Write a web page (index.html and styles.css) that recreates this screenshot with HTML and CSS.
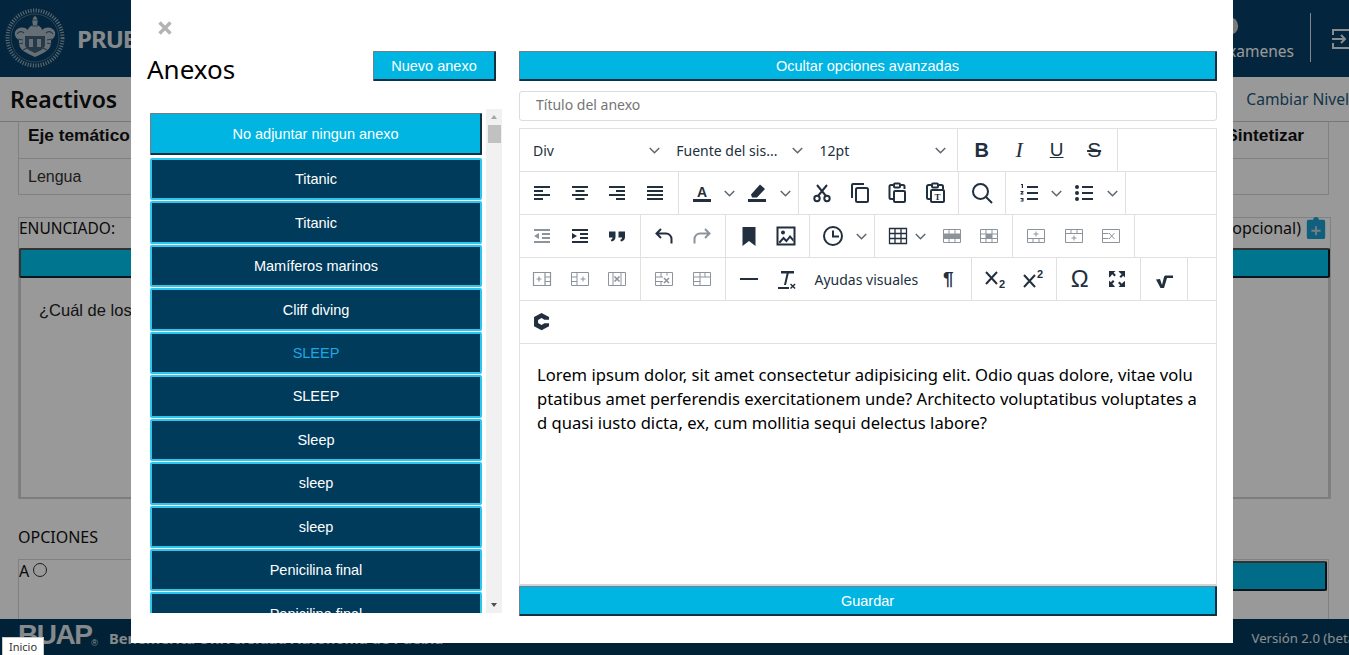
FILE: index.html
```html
<!DOCTYPE html>
<html lang="es">
<head>
<meta charset="utf-8">
<title>Anexos</title>
<link rel="stylesheet" href="styles.css">
</head>
<body>
<svg class="defs" aria-hidden="true">
  <symbol id="chev" viewBox="0 0 10 6"><path d="M.7.7 5 5 9.3.7" fill="none" stroke="currentColor" stroke-width="1.4"/></symbol>
  <symbol id="left" viewBox="0 0 24 24"><path d="M4 5h16v2H4zM4 9h9v2H4zM4 13h16v2H4zM4 17h9v2H4z"/></symbol>
  <symbol id="center" viewBox="0 0 24 24"><path d="M4 5h16v2H4zM7.500 9h9v2h-9zM4 13h16v2H4zM7.500 17h9v2h-9z"/></symbol>
  <symbol id="right" viewBox="0 0 24 24"><path d="M4 5h16v2H4zM11 9h9v2h-9zM4 13h16v2H4zM11 17h9v2h-9z"/></symbol>
  <symbol id="just" viewBox="0 0 24 24"><path d="M4 5h16v2H4zM4 9h16v2H4zM4 13h16v2H4zM4 17h16v2H4z"/></symbol>
  <symbol id="pen" viewBox="0 0 24 24"><path d="M3 18h18v3H3zM15 3.500l5 4.500-8 8.500H7l-1-3z"/></symbol>
  <symbol id="cut" viewBox="0 0 24 24"><g fill="none" stroke="currentColor" stroke-width="2"><circle cx="7" cy="17.500" r="2.700"/><circle cx="17" cy="17.500" r="2.700"/><path d="M16 15 7 4M8 15l9-11"/></g></symbol>
  <symbol id="copy" viewBox="0 0 24 24"><g fill="none" stroke="currentColor" stroke-width="2"><path d="M4 17V4a1 1 0 0 1 1-1h11"/><rect x="8" y="7" width="12" height="14" rx="1.500"/></g></symbol>
  <symbol id="paste" viewBox="0 0 24 24"><g fill="none" stroke="currentColor" stroke-width="2"><path d="M8 18H6a1.500 1.500 0 0 1-1.500-1.500v-11A1.500 1.500 0 0 1 6 4h2M16 4h2a1.500 1.500 0 0 1 1.500 1.500V8"/><rect x="9" y="2.500" width="6" height="4" rx="1"/><rect x="9" y="10" width="11" height="11" rx="1"/></g></symbol>
  <symbol id="search" viewBox="0 0 24 24"><g fill="none" stroke="currentColor" stroke-width="2"><circle cx="10.500" cy="10.500" r="7.500"/><path d="m16 16 6 6"/></g></symbol>
  <symbol id="num" viewBox="0 0 24 24"><path d="M10 5h11v2H10zM10 11h11v2H10zM10 17h11v2H10z"/><path d="M4 3h2v4H4.800V4H4zM3.500 10h3v1L5 12.500h1.500v1h-3v-1L5 11H3.500zM3.500 17h3v3.500h-3v-.8h1.900v-.5H4.300v-.7h1.100v-.5H3.500z"/></symbol>
  <symbol id="bul" viewBox="0 0 24 24"><path d="M10 5h11v2H10zM10 11h11v2H10zM10 17h11v2H10z"/><circle cx="5" cy="6" r="2"/><circle cx="5" cy="12" r="2"/><circle cx="5" cy="18" r="2"/></symbol>
  <symbol id="outd" viewBox="0 0 24 24"><path d="M4 5h16v2H4zM12 9h8v2h-8zM12 13h8v2h-8zM4 17h16v2H4zM9 9v6l-5-3z"/></symbol>
  <symbol id="ind" viewBox="0 0 24 24"><path d="M4 5h16v2H4zM12 9h8v2h-8zM12 13h8v2h-8zM4 17h16v2H4zM4 9v6l5-3z"/></symbol>
  <symbol id="quote" viewBox="0 0 24 24"><path d="M4 7.500h6.500v5.500c0 2.500-1.500 4-4 4.500l-.8-1.700c1.200-.4 1.800-1 1.900-2.300H4zM13.500 7.500H20v5.500c0 2.500-1.500 4-4 4.500l-.8-1.700c1.200-.4 1.800-1 1.900-2.300h-3.600z"/></symbol>
  <symbol id="undo" viewBox="0 0 24 24"><path d="M9 5 4.500 9.500 9 14M5 9.500h9a5.500 5.500 0 0 1 5.500 5.500v4.500" fill="none" stroke="currentColor" stroke-width="2"/></symbol>
  <symbol id="redo" viewBox="0 0 24 24"><path d="M15 5l4.500 4.500L15 14M19 9.500h-9A5.500 5.500 0 0 0 4.500 15v4.500" fill="none" stroke="currentColor" stroke-width="2"/></symbol>
  <symbol id="mark" viewBox="0 0 24 24"><path d="M5.500 3h13v19L12 17l-6.500 5z"/></symbol>
  <symbol id="image" viewBox="0 0 24 24"><path d="M2.500 2.500h19v19h-19zm2 2v15h15v-15z" fill-rule="evenodd"/><circle cx="9" cy="8.500" r="2"/><path d="m4.500 18 5-5.500 3 3 3.500-4.500 3.500 4v3l-3.500-4-3.500 4.500-3-3-3.500 4z"/></symbol>
  <symbol id="clock" viewBox="0 0 24 24"><g fill="none" stroke="currentColor" stroke-width="2"><circle cx="12" cy="12" r="9"/><path d="M12 6.500V12.500H18"/></g></symbol>
  <symbol id="grid" viewBox="0 0 24 24"><path d="M3.500 4.500h17v15h-17zM3.500 9.500h17M3.500 14.500h17M9 4.500v15M15 4.500v15" fill="none" stroke="currentColor" stroke-width="1.300"/></symbol>
  <symbol id="rowp" viewBox="0 0 24 24"><path d="M3.500 5.500h17v13h-17zM3.500 10h17M3.500 14.500h17M9 5.500v13M15 5.500v13" fill="none" stroke="currentColor"/><path d="M3.500 10h17v4.500h-17z"/></symbol>
  <symbol id="cellp" viewBox="0 0 24 24"><path d="M3.500 5.500h17v13h-17zM3.500 10h17M3.500 14.500h17M9 5.500v13M15 5.500v13" fill="none" stroke="currentColor"/><path d="M9 10h6v4.500H9z"/></symbol>
  <symbol id="rowb" viewBox="0 0 24 24"><path d="M3.500 5.500h17v13h-17zM3.500 14.500h17M9 14.500v4M15 14.500v4M12 7.500v5M9.500 10h5" fill="none" stroke="currentColor"/></symbol>
  <symbol id="rowa" viewBox="0 0 24 24"><path d="M3.500 5.500h17v13h-17zM3.500 9.500h17M9 5.500v4M15 5.500v4M12 11.500v5M9.500 14h5" fill="none" stroke="currentColor"/></symbol>
  <symbol id="rowx" viewBox="0 0 24 24"><path d="M3.500 5.500h17v13h-17zM3.500 9.500h6M3.500 14.500h6M10 9l5.500 6M15.500 9 10 15" fill="none" stroke="currentColor"/></symbol>
  <symbol id="colb" viewBox="0 0 24 24"><path d="M3.500 5.500h17v13h-17zM15 5.500v13M15 10h5.500M15 14.500h5.500M9 9.500v5M6.500 12h5" fill="none" stroke="currentColor" stroke-width="1.200"/></symbol>
  <symbol id="cola" viewBox="0 0 24 24"><path d="M3.500 5.500h17v13h-17zM9 5.500v13M3.500 10H9M3.500 14.500H9M15 9.500v5M12.500 12h5" fill="none" stroke="currentColor" stroke-width="1"/></symbol>
  <symbol id="colx" viewBox="0 0 24 24"><path d="M3.500 5.500h17v13h-17zM8 5.500v13M16 5.500v13" fill="none" stroke="currentColor"/><path d="m9.500 9.500 5 5M14.500 9.500l-5 5" fill="none" stroke="currentColor" stroke-width="1.600"/></symbol>
  <symbol id="cellx" viewBox="0 0 24 24"><path d="M3.500 5.500h17v13h-17zM3.500 10H11M3.500 14.500H11M9 5.500v4.500M15 5.500v3M9 14.500v4" fill="none" stroke="currentColor"/><path d="m12 11 5 5M17 11l-5 5" fill="none" stroke="currentColor" stroke-width="1.600"/></symbol>
  <symbol id="props" viewBox="0 0 24 24"><path d="M3.500 5.500h17v13h-17zM3.500 10h17M3.500 14.500h7M10 5.500v13M15 5.500v4.500" fill="none" stroke="currentColor"/></symbol>
  <symbol id="hr" viewBox="0 0 24 24"><path d="M3 11h18v2H3z"/></symbol>
  <symbol id="clear" viewBox="0 0 24 24"><path d="M7 4h13v2.500h-5.300L12 18h-2l2.600-11.500H7zM4 20h11v2H4zM17 16.500l1.800 1.800 1.800-1.800 1 1-1.800 1.800 1.800 1.800-1 1-1.800-1.800-1.800 1.800-1-1 1.800-1.800-1.800-1.800z"/></symbol>
  <symbol id="full" viewBox="0 0 24 24"><path d="M4 4h6.500L8.700 5.800l2.200 2.200-1.500 1.500-2.200-2.200L5.500 9.500 4 10.500zM20 4v6.500l-1.800-1.800-2.200 2.200-1.500-1.500 2.200-2.200L14.500 5.500 13.500 4zM4 20v-6.500l1.800 1.800 2.200-2.200 1.500 1.500-2.200 2.200 1.700 1.700 1 1.500zM20 20h-6.500l1.800-1.800-2.200-2.200 1.500-1.500 2.200 2.200 1.700-1.700 1.500-1z"/></symbol>
  <symbol id="check" viewBox="0 0 24 24"><path d="M4 12.500l4-.5 2 6 2-8c.3-1 1-1.500 2-1.500h7v2.500h-6l-3 10H8.500z"/></symbol>
  <symbol id="cfont" viewBox="2 2 20.800 20.800"><path d="M12 4.500 18.500 8v2.500h-4L12 9l-3 1.700v2.600L12 15l2.500-1.500h4V16L12 19.500 5.500 16V8z"/></symbol>
</svg>

<div class="page">
  <header class="top">
    <div class="brand">
      <svg class="seal" viewBox="0 0 60 60">
        <circle cx="30" cy="30" r="27.500" fill="none" stroke="#93a9b7" stroke-width="4" stroke-dasharray="1.200 1.400"/>
        <circle cx="30" cy="30" r="24" fill="none" stroke="#7f98a8" stroke-width=".6"/>
        <path d="M30 8c3 2 3 6 2 9 3 1 5 3 5 5 4-4 11-3 13 2 1 4-2 7-4 8 1 5-2 10-6 12-3 2-6 3-10 5-4-2-7-3-10-5-4-2-7-7-6-12-2-1-5-4-4-8 2-5 9-6 13-2 0-2 2-4 5-5-1-3-1-7 2-9z" fill="#a9b9c4"/>
        <path d="M20 28h20v9c0 3-5 6-10 8-5-2-10-5-10-8z" fill="#3f6078"/>
        <path d="M24 31h4v8h-4zM32 31h4v8h-4z" fill="#a9b9c4"/>
        <path d="M12 26c2-3 5-3 7-1M41 25c2-2 5-2 7 1M13 31l5 1M42 32l5-1M14 36l4-1M42 35l4 1M27 12h6M27 18h6M18 42l4-2M42 42l-4-2" fill="none" stroke="#3f6078" stroke-width="1.200"/>
      </svg>
      <span class="brand-name">PRUEBAS</span>
    </div>
    <nav class="top-nav">
      <a class="nav-item">
        <svg class="nav-ic" viewBox="0 0 24 24"><circle cx="12" cy="12" r="10"/></svg>
        <span class="nav-label">Examenes</span>
      </a>
      <span class="nav-sep"></span>
      <svg class="logout" viewBox="0 0 24 24"><path d="M2 8V3H22V21H2V16M1 12h13M10 8l4 4-4 4" fill="none" stroke="currentColor" stroke-width="2"/></svg>
    </nav>
  </header>
  <div class="subbar">
    <h1 class="subbar-title">Reactivos</h1>
    <span class="subbar-link">Cambiar Nivel</span>
  </div>
  <main class="content">
    <div class="meta">
      <div class="meta-cell head">Eje temático</div>
      <div class="meta-cell head end">Sintetizar</div>
      <div class="meta-cell">Lengua</div>
      <div class="meta-cell"></div>
    </div>
    <section class="stmt">
      <div class="stmt-head">
        <span>ENUNCIADO:</span>
        <span class="stmt-opt">Imagen (opcional)
          <svg class="clip" viewBox="0 0 20 24"><path d="M2 3h5a3 3 0 0 1 6 0h5a2 2 0 0 1 2 2v17a2 2 0 0 1-2 2H2a2 2 0 0 1-2-2V5a2 2 0 0 1 2-2z"/><path d="M9 10h2v4h4v2h-4v4H9v-4H5v-2h4z" fill="#c8d4da"/></svg>
        </span>
      </div>
      <div class="teal-bar top-bar"></div>
      <div class="stmt-body">¿Cuál de los siguientes enunciados es correcto?</div>
    </section>
    <h2 class="opts-title">OPCIONES</h2>
    <div class="opts">
      <div class="opt"><span class="opt-label">A</span><span class="radio"></span></div>
      <div class="opt"><div class="teal-bar"></div></div>
    </div>
  </main>
  <footer class="foot">
    <span class="foot-logo">BUAP<sup>®</sup></span>
    <span class="foot-name">Benemérita Universidad Autónoma de Puebla</span>
    <span class="foot-ver">Versión 2.0 (beta)</span>
  </footer>
</div>

<div class="overlay"></div>

<div class="modal">
  <div class="modal-close"><svg class="x" viewBox="0 0 14 14"><path d="M1.500 1.500l11 11M12.500 1.500l-11 11" stroke="currentColor" stroke-width="3.400" fill="none"/></svg></div>
  <div class="modal-cols">
    <div class="col-left">
      <div class="left-head">
        <h2 class="left-title">Anexos</h2>
        <button class="btn btn-new">Nuevo anexo</button>
      </div>
      <div class="list-wrap">
        <div class="list">
          <button class="btn btn-none">No adjuntar ningun anexo</button>
          <button class="item">Titanic</button>
          <button class="item">Titanic</button>
          <button class="item">Mamíferos marinos</button>
          <button class="item">Cliff diving</button>
          <button class="item active">SLEEP</button>
          <button class="item">SLEEP</button>
          <button class="item">Sleep</button>
          <button class="item">sleep</button>
          <button class="item">sleep</button>
          <button class="item">Penicilina final</button>
          <button class="item">Penicilina final</button>
        </div>
        <div class="sbar">
          <span class="sbar-up"></span>
          <span class="sbar-thumb"></span>
          <span class="sbar-down"></span>
        </div>
      </div>
    </div>
    <div class="col-right">
      <button class="btn btn-wide">Ocultar opciones avanzadas</button>
      <input class="title-input" type="text" placeholder="Título del anexo">
      <div class="editor">
        <div class="tb-row">
          <div class="grp">
            <div class="sel"><span>Div</span><svg class="chev"><use href="#chev"/></svg></div>
            <div class="sel"><span>Fuente del sis...</span><svg class="chev"><use href="#chev"/></svg></div>
            <div class="sel"><span>12pt</span><svg class="chev"><use href="#chev"/></svg></div>
          </div>
          <div class="grp">
            <span class="tb tb-txt b">B</span>
            <span class="tb tb-txt i">I</span>
            <span class="tb tb-txt u">U</span>
            <span class="tb tb-txt s">S</span>
          </div>
        </div>
        <div class="tb-row">
          <div class="grp">
            <span class="tb"><svg class="ic"><use href="#left"/></svg></span>
            <span class="tb"><svg class="ic"><use href="#center"/></svg></span>
            <span class="tb"><svg class="ic"><use href="#right"/></svg></span>
            <span class="tb"><svg class="ic"><use href="#just"/></svg></span>
          </div>
          <div class="grp">
            <span class="tb"><svg class="ic" viewBox="0 0 24 24"><path d="M3 18h18v3H3z"/><text x="12" y="15.500" text-anchor="middle" font-family="Liberation Sans" font-weight="700" font-size="14">A</text></svg></span><span class="tb-ch"><svg class="chev"><use href="#chev"/></svg></span>
            <span class="tb"><svg class="ic"><use href="#pen"/></svg></span><span class="tb-ch"><svg class="chev"><use href="#chev"/></svg></span>
          </div>
          <div class="grp">
            <span class="tb"><svg class="ic"><use href="#cut"/></svg></span>
            <span class="tb"><svg class="ic"><use href="#copy"/></svg></span>
            <span class="tb"><svg class="ic"><use href="#paste"/></svg></span>
            <span class="tb"><svg class="ic" viewBox="0 0 24 24"><g fill="none" stroke="currentColor" stroke-width="2"><path d="M7 18H5.500A1.500 1.500 0 0 1 4 16.500v-11A1.500 1.500 0 0 1 5.500 4H8M16 4h2.500A1.500 1.500 0 0 1 20 5.500V8"/><rect x="9" y="2.500" width="6" height="4" rx="1"/><rect x="8" y="9" width="13" height="12" rx="1"/></g><text x="14.500" y="18.500" text-anchor="middle" font-family="Liberation Serif" font-weight="700" font-size="9">T</text></svg></span>
          </div>
          <div class="grp">
            <span class="tb"><svg class="ic"><use href="#search"/></svg></span>
          </div>
          <div class="grp">
            <span class="tb"><svg class="ic"><use href="#num"/></svg></span><span class="tb-ch"><svg class="chev"><use href="#chev"/></svg></span>
            <span class="tb"><svg class="ic"><use href="#bul"/></svg></span><span class="tb-ch"><svg class="chev"><use href="#chev"/></svg></span>
          </div>
        </div>
        <div class="tb-row">
          <div class="grp">
            <span class="tb off"><svg class="ic"><use href="#outd"/></svg></span>
            <span class="tb"><svg class="ic"><use href="#ind"/></svg></span>
            <span class="tb"><svg class="ic"><use href="#quote"/></svg></span>
          </div>
          <div class="grp">
            <span class="tb"><svg class="ic"><use href="#undo"/></svg></span>
            <span class="tb off"><svg class="ic"><use href="#redo"/></svg></span>
          </div>
          <div class="grp">
            <span class="tb"><svg class="ic"><use href="#mark"/></svg></span>
            <span class="tb"><svg class="ic"><use href="#image"/></svg></span>
          </div>
          <div class="grp">
            <span class="tb"><svg class="ic"><use href="#clock"/></svg></span><span class="tb-ch"><svg class="chev"><use href="#chev"/></svg></span>
          </div>
          <div class="grp">
            <span class="tb"><svg class="ic"><use href="#grid"/></svg></span><span class="tb-ch tb-ch-tight"><svg class="chev"><use href="#chev"/></svg></span>
            <span class="tb off tb-after-tight"><svg class="ic"><use href="#rowp"/></svg></span>
            <span class="tb off"><svg class="ic"><use href="#cellp"/></svg></span>
          </div>
          <div class="grp">
            <span class="tb off"><svg class="ic"><use href="#rowb"/></svg></span>
            <span class="tb off"><svg class="ic"><use href="#rowa"/></svg></span>
            <span class="tb off"><svg class="ic"><use href="#rowx"/></svg></span>
          </div>
        </div>
        <div class="tb-row">
          <div class="grp">
            <span class="tb off"><svg class="ic"><use href="#colb"/></svg></span>
            <span class="tb off"><svg class="ic"><use href="#cola"/></svg></span>
            <span class="tb off"><svg class="ic"><use href="#colx"/></svg></span>
          </div>
          <div class="grp">
            <span class="tb off"><svg class="ic"><use href="#cellx"/></svg></span>
            <span class="tb off"><svg class="ic"><use href="#props"/></svg></span>
          </div>
          <div class="grp">
            <span class="tb"><svg class="ic"><use href="#hr"/></svg></span>
            <span class="tb"><svg class="ic"><use href="#clear"/></svg></span>
            <span class="tb-word">Ayudas visuales</span>
            <span class="tb tb-txt para">¶</span>
          </div>
          <div class="grp">
            <span class="tb"><svg class="ic" viewBox="0 0 24 24"><path d="m3 5 11 12M14 5 3 17" fill="none" stroke="currentColor" stroke-width="2"/><text x="19" y="21" text-anchor="middle" font-family="Liberation Sans" font-weight="700" font-size="11">2</text></svg></span>
            <span class="tb"><svg class="ic" viewBox="0 0 24 24"><path d="m3 8 11 12M14 8 3 20" fill="none" stroke="currentColor" stroke-width="2"/><text x="19" y="11" text-anchor="middle" font-family="Liberation Sans" font-weight="700" font-size="11">2</text></svg></span>
          </div>
          <div class="grp">
            <span class="tb tb-txt omega">Ω</span>
            <span class="tb"><svg class="ic"><use href="#full"/></svg></span>
          </div>
          <div class="grp">
            <span class="tb"><svg class="ic"><use href="#check"/></svg></span>
          </div>
        </div>
        <div class="tb-row">
          <div class="grp plain">
            <span class="tb"><svg class="ic"><use href="#cfont"/></svg></span>
          </div>
        </div>
        <div class="edit-body">Lorem ipsum dolor, sit amet consectetur adipisicing elit. Odio quas dolore, vitae volu<br>ptatibus amet perferendis exercitationem unde? Architecto voluptatibus voluptates a<br>d quasi iusto dicta, ex, cum mollitia sequi delectus labore?</div>
      </div>
      <button class="btn btn-wide btn-save">Guardar</button>
    </div>
  </div>
</div>

<div class="status-tip">Inicio</div>
</body>
</html>
```

FILE: styles.css
```css
* { box-sizing: border-box; }
html, body { margin: 0; height: 100%; overflow: hidden; }
body { font-family: "Noto Sans", sans-serif; background: #fff; color: #222; }
.defs { position: absolute; width: 0; height: 0; }

.page { display: flex; flex-direction: column; height: 655px; overflow: hidden; }

/* Header */
.top { flex: none; height: 77px; background: #053f66; color: #fff; display: flex; justify-content: space-between; align-items: stretch; padding-left: 5px; }
.brand { display: flex; align-items: center; gap: 12px; margin-top: -1px; }
.seal { width: 60px; height: 60px; }
.brand-name { font-size: 24px; font-weight: 700; color: #e0e5e8; letter-spacing: -1px; }
.top-nav { display: flex; align-items: center; height: 77px; }
.nav-item { display: flex; flex-direction: column; align-items: flex-start; font-size: 15.500px; color: #fff; }
.nav-ic { width: 22px; height: 22px; fill: #ccc; margin-left: -2px; }
.nav-label { margin-top: 3px; line-height: 22px; }
.nav-sep { width: 1px; height: 49px; margin: 0 20px 2px 16px; background: #ddd; }
.logout { width: 24px; height: 24px; color: #e4e8eb; flex: none; margin-right: -6px; }

/* Sub-bar */
.subbar { flex: none; height: 45px; display: flex; justify-content: space-between; align-items: center; padding: 0 0 0 10px; border-bottom: 1px solid #c8c8c8; }
.subbar-title { margin: 0; font-size: 23px; line-height: 30px; font-weight: 600; color: #111; }
.subbar-link { font-size: 15.600px; color: #1c5878; white-space: nowrap; }

/* Page content behind the dialog */
.content { flex: 1; min-height: 0; overflow: hidden; padding: 0 18px; font-family: "Liberation Sans", sans-serif; font-size: 16px; }
.meta { display: grid; grid-template-columns: 1fr 1fr; grid-template-rows: 37px 35px; width: 1311px; border: 1px solid #d8d8d8; border-top: 0; }
.meta-cell { padding: 0 9px; display: flex; align-items: center; border-bottom: 1px solid #d8d8d8; color: #333; font-size: 16px; }
.meta-cell:nth-last-child(-n+2) { border-bottom: 0; }
.meta-cell.head { font-weight: 700; font-size: 17.300px; color: #111; padding-bottom: 10px; }
.meta-cell.end { justify-content: flex-end; padding-right: 24px; }
.stmt { margin-top: 22px; height: 282px; width: 1313px; border: 1px solid #d8d8d8; border-bottom: 0; display: flex; flex-direction: column; }
.stmt-head { height: 29px; display: flex; justify-content: space-between; align-items: center; font-family: "Noto Sans", sans-serif; font-size: 15.500px; color: #111; padding-bottom: 9px; }
.stmt-opt { display: flex; align-items: center; gap: 5px; font-size: 16px; padding-right: 4px; }
.clip { width: 20px; height: 22px; fill: #1c9fd0; flex: none; }
.teal-bar { height: 31px; background: #00b5e2; border: 2px solid; border-color: #555 #0d1d26 #0d2530 #555; border-radius: 2px; flex: none; margin: 0 1px; }
.top-bar { background: #00c4ef; margin-top: 1px; margin-left: 0; margin-right: 0; height: 30px; }
.stmt-body { flex: 1; margin: 0; border: 2px solid #d0d0d0; border-top: 0; padding: 23px 18px; color: #222; font-size: 16.500px; }
.opts-title { margin: 27px 0 11px; font-family: "Noto Sans", sans-serif; font-size: 16px; line-height: 22px; font-weight: 400; color: #111; }
.opts { display: grid; grid-template-columns: 642px 1fr; width: 1311px; height: 80px; border: 1px solid #d8d8d8; }
.opt { display: flex; align-items: flex-start; font-family: "Noto Sans", sans-serif; gap: 4px; padding-top: 0; }
.opt .teal-bar { flex: 1; margin-top: 1px; height: 30px; }
.opt-label { font-size: 16px; line-height: 22px; color: #111; }
.radio { width: 14px; height: 14px; border: 1px solid #333; border-radius: 50%; margin-top: 3px; }

/* Footer */
.foot { flex: none; height: 36px; background: #02385a; color: #fff; display: flex; align-items: center; padding-left: 18px; position: relative; }
.foot-logo { font-family: "Liberation Sans", sans-serif; font-weight: 700; font-size: 28px; letter-spacing: -1.500px; color: #dfe4e8; line-height: 24px; margin-top: 4px; }
.foot-logo sup { font-size: 9px; letter-spacing: 0; vertical-align: -2px; font-weight: 400; }
.foot-name { margin-left: 11px; font-weight: 700; font-size: 14.700px; color: #dfe4e8; margin-top: 2px; white-space: nowrap; }
.foot-ver { margin-left: auto; font-size: 13.200px; color: #e8ecef; white-space: nowrap; margin-right: -10px; margin-top: 2px; }

/* Dialog layer */
.overlay { position: fixed; inset: 0; background: rgba(0, 0, 0, .4); }
.modal { position: fixed; left: 131px; top: 0; width: 1102px; height: 643px; background: #fff; padding: 0 16px; display: flex; flex-direction: column; }
.modal-close { height: 51px; padding: 21px 0 0 11px; flex: none; }
.x { display: block; width: 14px; height: 14px; color: #b3b3b3; }
.modal-cols { display: flex; gap: 16px; flex: 1; min-height: 0; }
.col-left { width: 356px; flex: none; display: flex; flex-direction: column; }
.col-right { width: 698px; flex: none; display: flex; flex-direction: column; }

.btn { display: block; font-family: "Liberation Sans", sans-serif; font-size: 14.500px; color: #fff; background: #00b5e2; border: 2px solid; border-color: #6f8088 #0f3242 #0f3242 #6f8088; border-width: 1px 2px 2px 1px; border-radius: 1px; padding: 0; cursor: pointer; }
.left-head { display: flex; justify-content: space-between; align-items: flex-start; height: 58px; padding-right: 7px; flex: none; }
.left-title { margin: 0; font-size: 26px; line-height: 36px; font-weight: 400; color: #000; }
.btn-new { width: 123px; height: 30px; }
.list-wrap { display: flex; height: 504px; padding-left: 3px; flex: none; }
.list { width: 332px; overflow: hidden; padding-top: 4px; flex: none; }
.btn-none { width: 332px; height: 42px; margin-bottom: 3px; }
.item { display: block; width: 332px; height: 42.450px; margin: 0 0 1px; padding: 0; font-family: "Liberation Sans", sans-serif; font-size: 14.500px; color: #fff; background: #003b5c; border: 2px solid #2cc6ee; border-radius: 2px; }
.item.active { color: #1ea7e0; }
.sbar { width: 16px; margin-left: 4px; flex: none; background: #f1f1f1; display: flex; flex-direction: column; align-items: center; position: relative; }
.sbar-up { width: 0; height: 0; margin-top: 6px; border: 3.500px solid transparent; border-top: 0; border-bottom: 4px solid #a5a5a5; }
.sbar-thumb { width: 13px; height: 18px; background: #c1c1c1; margin-top: 6px; }
.sbar-down { width: 0; height: 0; margin-top: auto; margin-bottom: 6px; border: 3.500px solid transparent; border-bottom: 0; border-top: 4px solid #505050; }

.btn-wide { width: 698px; height: 30px; flex: none; }
.title-input { width: 698px; height: 30px; margin: 10px 0 7px; flex: none; border: 1px solid #dcdcdc; border-radius: 3px; padding: 0 16px 4px; font-family: "Noto Sans", sans-serif; font-size: 14px; outline: 0; }
.title-input::placeholder { color: #757575; }

/* Editor */
.editor { height: 458px; flex: none; display: flex; flex-direction: column; border: 1px solid #e2e2e2; border-bottom: 2px solid #d4d4d4; }
.tb-row { flex: none; height: 43px; display: flex; border-bottom: 1px solid #e0e0e0; }
.grp { display: flex; align-items: center; padding: 0 4px 0 4.500px; border-right: 1px solid #e0e0e0; flex: none; height: 100%; }
.grp:first-child { padding-left: 3.500px; }
.grp.plain { border-right: 0; }
.sel { width: 143.300px; display: flex; justify-content: space-between; align-items: center; padding: 0 7px 0 9.500px; font-size: 14px; color: #222f3e; white-space: nowrap; }
.sel span { padding-top: 1px; }
.tb { width: 37.500px; height: 34px; display: flex; align-items: center; justify-content: center; color: #222f3e; fill: #222f3e; flex: none; }
.tb.off { color: #8d939b; fill: #8d939b; }
.tb-ch { width: 18px; height: 34px; display: flex; align-items: center; justify-content: center; flex: none; }
.tb-ch-tight { margin-left: -6px; }
.tb-after-tight { margin-left: 4px; }
.ic { width: 24px; height: 24px; display: block; }
.chev { width: 11px; height: 7px; color: #5f6771; display: block; flex: none; }
.tb-txt { font-family: "Liberation Sans", sans-serif; font-size: 20px; line-height: 24px; }
.tb-txt.b { font-weight: 700; }
.tb-txt.i { font-family: "Liberation Serif", serif; font-style: italic; font-size: 22px; }
.tb-txt.u { text-decoration: underline; font-size: 19px; }
.tb-txt.s { text-decoration: line-through; font-size: 21px; }
.tb-txt.para { font-weight: 700; font-size: 19px; }
.tb-txt.omega { font-size: 24px; }
.tb-word { width: 124.500px; flex: none; padding-left: 9.500px; font-size: 14px; color: #222f3e; white-space: nowrap; }
.edit-body { flex: 1; padding: 19px 18px 0 17px; font-family: "Noto Sans", sans-serif; font-size: 16.600px; line-height: 24px; color: #000; white-space: nowrap; overflow: hidden; }
.btn-save { margin-top: 0; height: 30px; }

.status-tip { position: fixed; left: 2px; bottom: 0; height: 18px; width: 42px; background: #fff; border: 1px solid #ccc; border-width: 1px 1px 0 1px; font-size: 11px; line-height: 17px; color: #333; text-align: center; }
```
